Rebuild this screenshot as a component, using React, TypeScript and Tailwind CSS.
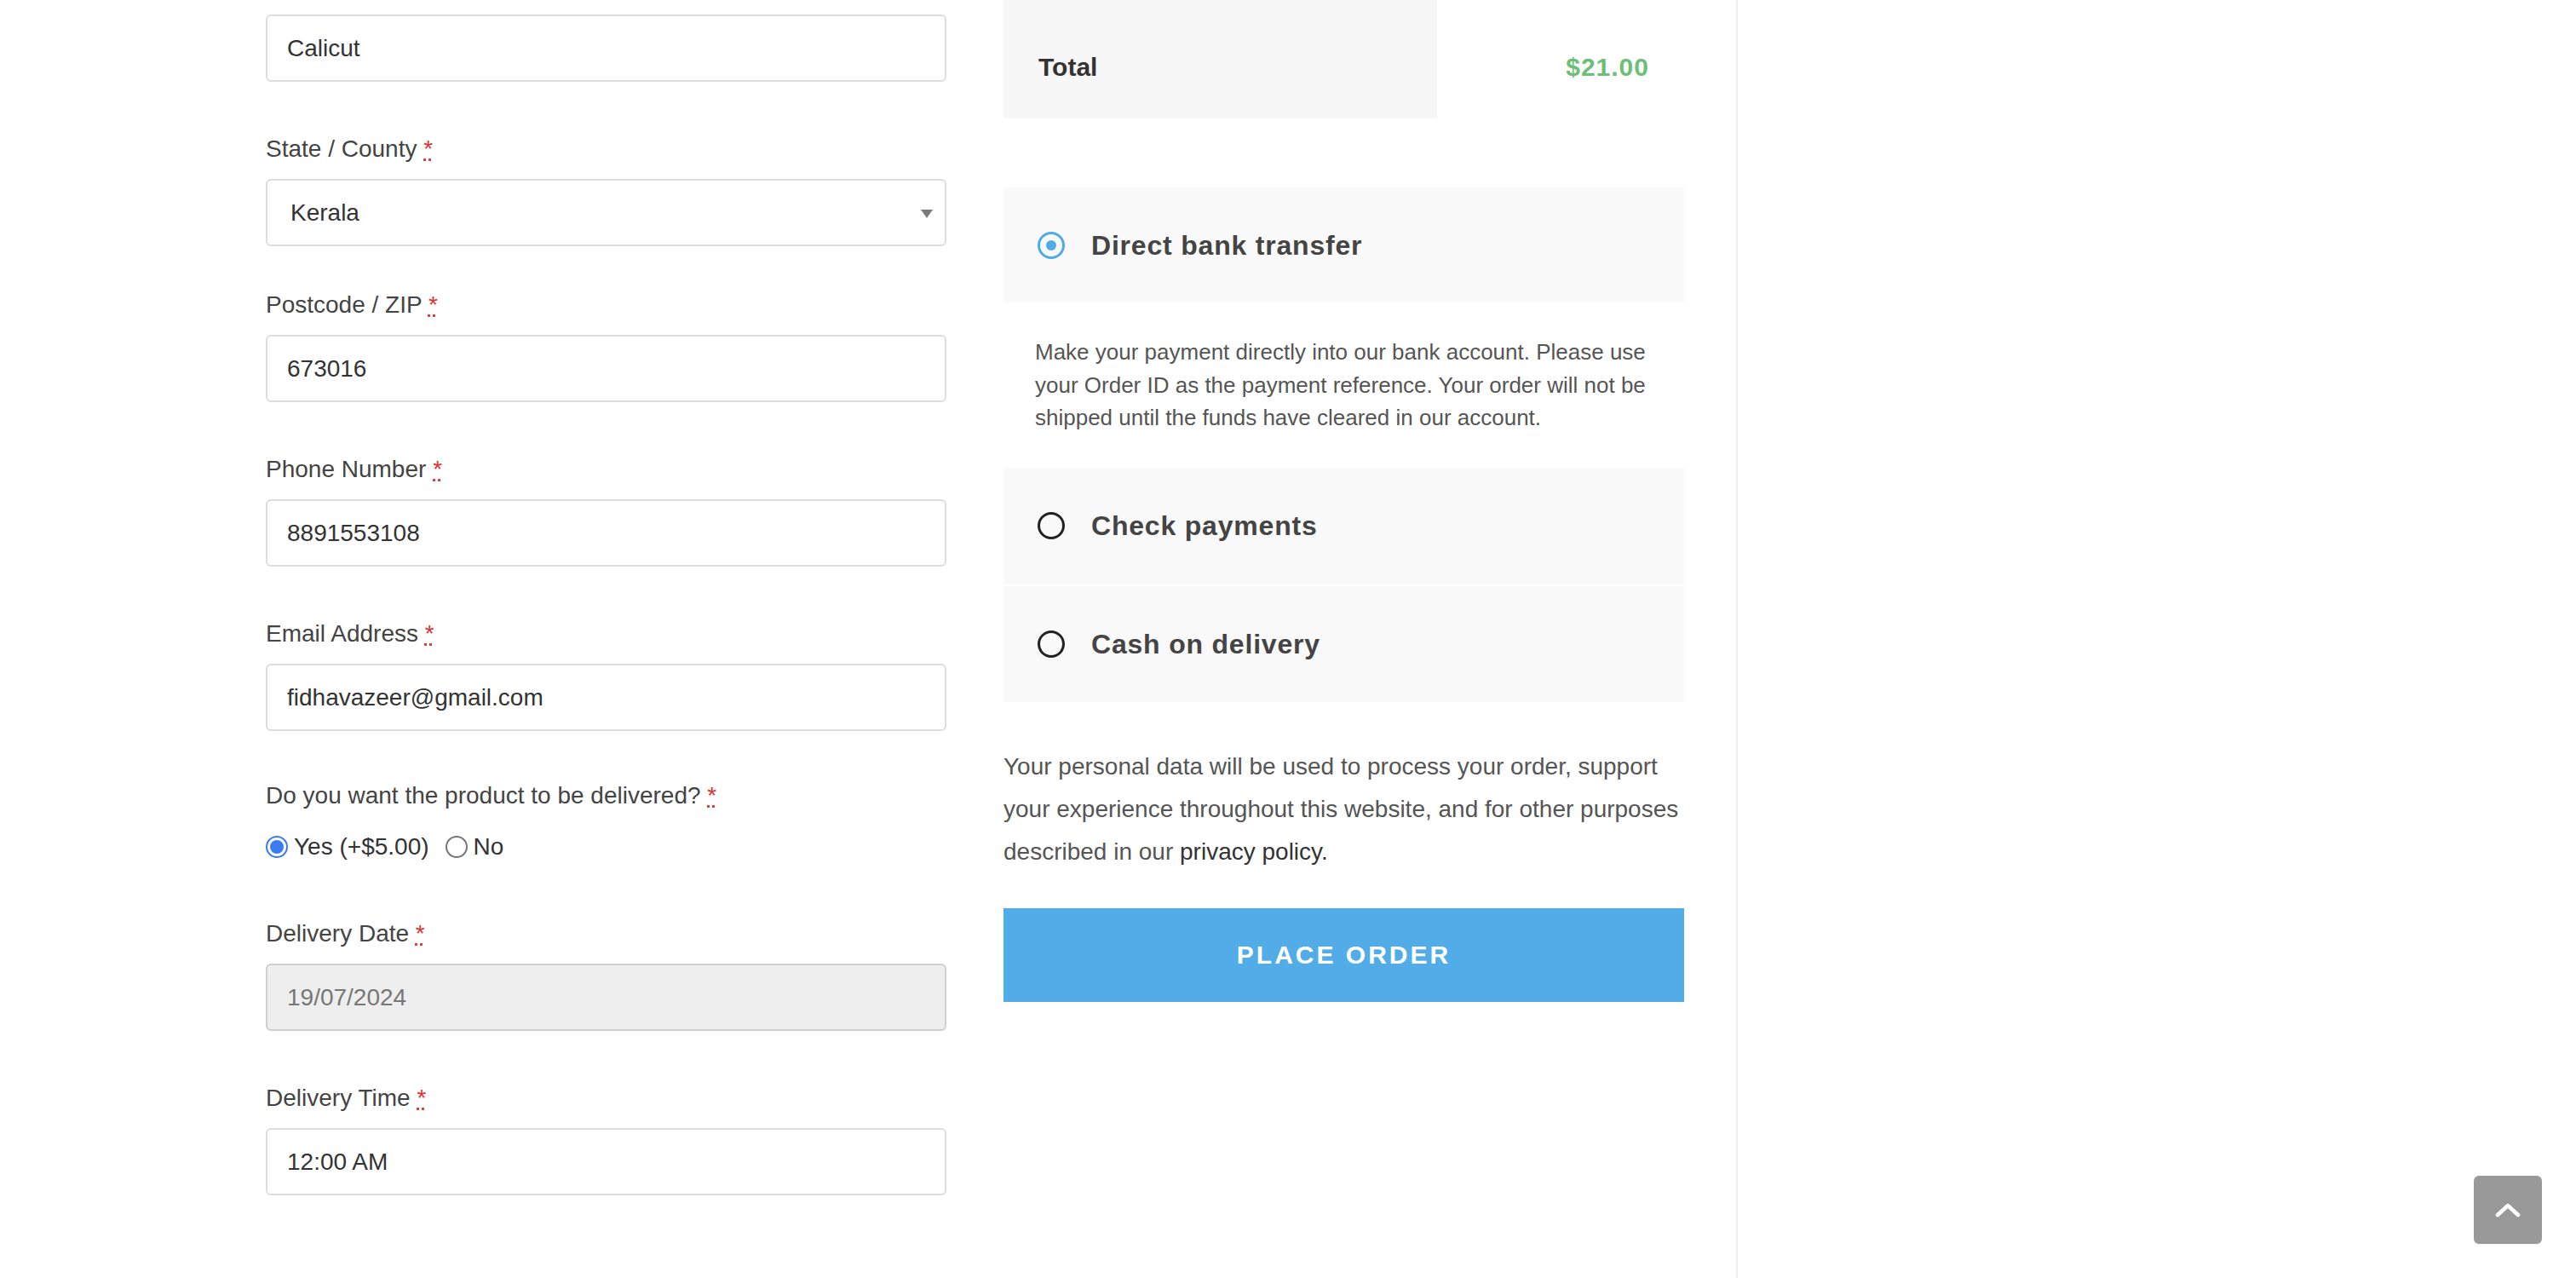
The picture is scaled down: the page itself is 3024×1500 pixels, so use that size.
import React from "react";

function Req() {
  return (
    <abbr title="required" className="text-[#dd3333] underline decoration-dotted">
      *
    </abbr>
  );
}

function Field({ label, children, mb = "mb-[59px]" }: { label: string; children: React.ReactNode; mb?: string }) {
  return (
    <div className={mb}>
      <label className="block text-[28px] leading-[40px] text-[#444] mb-[15px]">
        {label} <Req />
      </label>
      {children}
    </div>
  );
}

function TextBox({ value, disabled = false }: { value: string; disabled?: boolean }) {
  return (
    <div
      className={
        disabled
          ? "h-[79px] w-full border-2 border-[#cfcfcf] rounded-[6px] bg-[#eeeeee] px-[23px] flex items-center text-[28px] text-[#777]"
          : "h-[79px] w-full border-2 border-[#dddddd] rounded-[6px] bg-white px-[23px] flex items-center text-[28px] text-[#333]"
      }
    >
      {value}
    </div>
  );
}

function PayRadio({ checked }: { checked?: boolean }) {
  return checked ? (
    <span className="w-[32px] h-[32px] rounded-full border-[3px] border-[#4fabe6] flex items-center justify-center shrink-0">
      <span className="w-[12px] h-[12px] rounded-full bg-[#4fabe6]" />
    </span>
  ) : (
    <span className="w-[32px] h-[32px] rounded-full border-[3px] border-[#222] shrink-0" />
  );
}

export default function App() {
  return (
    <div className="relative min-h-[1500px] bg-white flex font-['Liberation_Sans',Arial,Helvetica,sans-serif]">
      <div className="flex pl-[312px]">
        {/* Left column */}
        <div className="w-[799px] pt-[17px]">
          <div className="mb-[59px]">
            <TextBox value="Calicut" />
          </div>

          <Field label="State / County" mb="mb-[49px]">
            <div className="relative h-[79px] w-full border-2 border-[#dddddd] rounded-[6px] bg-white pl-[27px] flex items-center text-[28px] text-[#333]">
              Kerala
              <svg className="absolute right-[14px] top-[34px]" width="14" height="10" viewBox="0 0 14 10">
                <path d="M0 0 L14 0 L7 10 Z" fill="#7a7a7a" />
              </svg>
            </div>
          </Field>

          <Field label="Postcode / ZIP">
            <TextBox value="673016" />
          </Field>

          <Field label="Phone Number">
            <TextBox value="8891553108" />
          </Field>

          <Field label="Email Address" mb="mb-[56px]">
            <TextBox value="fidhavazeer@gmail.com" />
          </Field>

          <div className="mb-[62px]">
            <label className="block text-[28px] leading-[40px] text-[#444] mb-[20px]">
              Do you want the product to be delivered? <Req />
            </label>
            <div className="flex items-center h-[40px] text-[28px] text-[#333]">
              <span className="w-[26px] h-[26px] rounded-full border-[2px] border-[#3b7cf5] flex items-center justify-center shrink-0">
                <span className="w-[16px] h-[16px] rounded-full bg-[#3b7cf5]" />
              </span>
              <span className="ml-[7px]">Yes (+$5.00)</span>
              <span className="ml-[19px] w-[26px] h-[26px] rounded-full border-[2px] border-[#767676] shrink-0" />
              <span className="ml-[7px]">No</span>
            </div>
          </div>

          <Field label="Delivery Date">
            <TextBox value="19/07/2024" disabled />
          </Field>

          <Field label="Delivery Time">
            <TextBox value="12:00 AM" />
          </Field>
        </div>

        {/* Right column */}
        <div className="w-[799px] ml-[67px]">
          <div className="flex h-[139px]">
            <div className="w-[509px] bg-[#f7f7f7] pl-[41px] pt-[59px] text-[30px] leading-[40px] font-bold text-[#333]">
              Total
            </div>
            <div className="flex-1 pt-[59px] pr-[41px] text-right text-[30px] leading-[40px] font-bold tracking-[1px] text-[#6dbe76]">
              $21.00
            </div>
          </div>

          <div className="mt-[81px]">
            <div className="h-[135px] bg-[#f9f9f9] flex items-center pl-[40px]">
              <PayRadio checked />
              <span className="ml-[31px] text-[32px] font-bold tracking-[0.8px] text-[#444]">Direct bank transfer</span>
            </div>
            <div className="px-[37px] py-[39px] text-[26px] leading-[38.6px] text-[#555]">
              Make your payment directly into our bank account. Please use your Order ID as the payment reference. Your
              order will not be shipped until the funds have cleared in our account.
            </div>
            <div className="h-[137px] bg-[#f9f9f9] flex items-center pl-[40px]">
              <PayRadio />
              <span className="ml-[31px] text-[32px] font-bold tracking-[0.8px] text-[#444]">Check payments</span>
            </div>
            <div className="h-[136px] mt-[2px] bg-[#f9f9f9] flex items-center pl-[40px]">
              <PayRadio />
              <span className="ml-[31px] text-[32px] font-bold tracking-[0.8px] text-[#444]">Cash on delivery</span>
            </div>
          </div>

          <p className="mt-[51px] text-[28px] leading-[50px] text-[#555]">
            Your personal data will be used to process your order, support your experience throughout this website, and
            for other purposes described in our <span className="text-[#333]">privacy policy.</span>
          </p>

          <button className="mt-[41px] w-full h-[110px] bg-[#52ace8] text-white font-bold text-[30px] tracking-[3px] uppercase">
            Place order
          </button>
        </div>
      </div>

      <div className="ml-[61px] w-[2px] bg-[#eeeeee] self-stretch" />
      <div className="flex-1" />

      <button className="fixed right-[40px] bottom-[40px] w-[80px] h-[80px] rounded-[6px] bg-[#999999] flex items-center justify-center">
        <svg width="30" height="18" viewBox="0 0 30 18">
          <path d="M3 15 L15 4 L27 15" fill="none" stroke="#fff" strokeWidth="4.5" strokeLinecap="round" strokeLinejoin="round" />
        </svg>
      </button>
    </div>
  );
}
